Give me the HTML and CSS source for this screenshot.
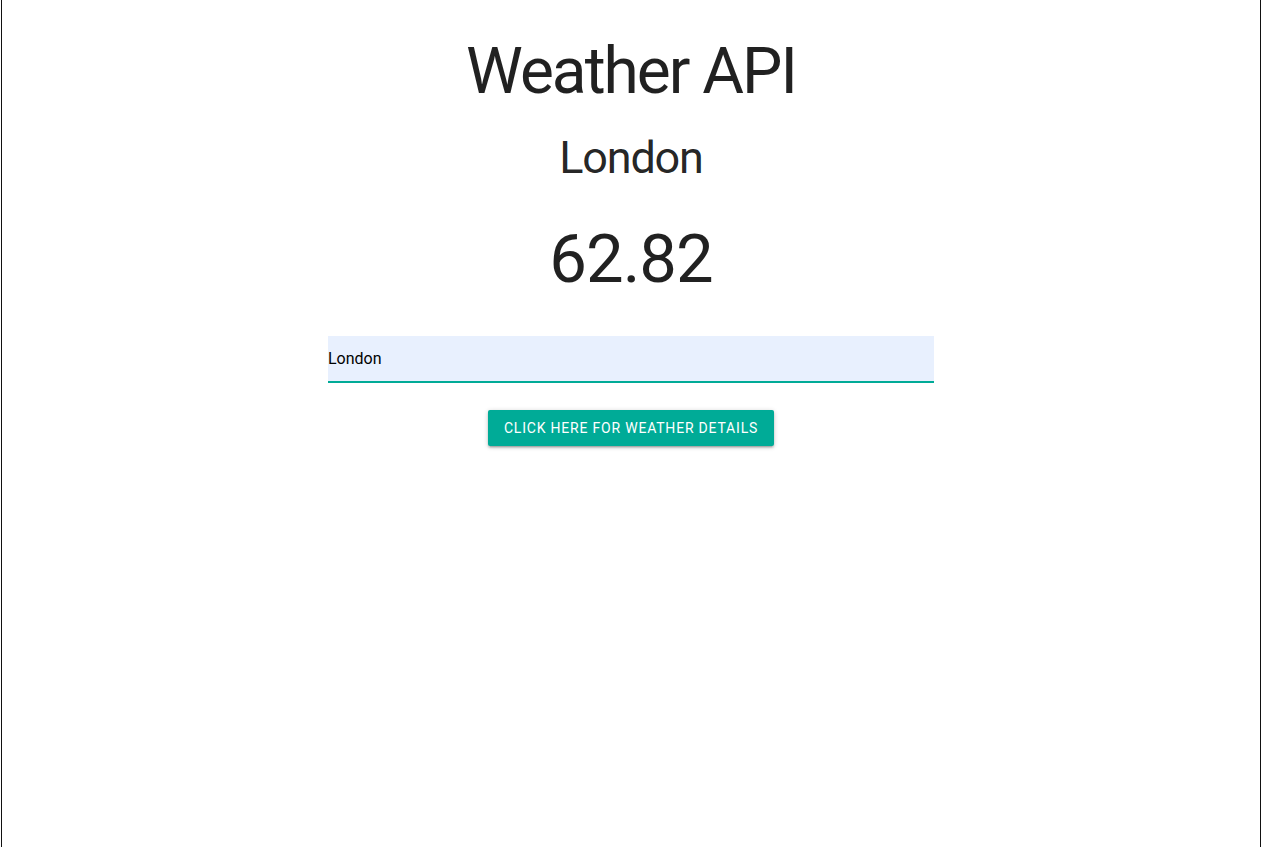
FILE: index.html
```html
<!DOCTYPE html>
<html lang="en">
<head>
<meta charset="utf-8">
<title>Weather API</title>
<link rel="stylesheet" href="styles.css">
</head>
<body>
<div class="frame">
  <main class="app">
    <h1 class="title">Weather API</h1>
    <h3 class="city">London</h3>
    <h1 class="temp">62.82</h1>
    <div class="field">
      <input class="city-input" id="city" type="text" value="London">
    </div>
    <button class="btn" type="button">Click here for weather details</button>
  </main>
</div>
<script src="app.js"></script>
</body>
</html>
```

FILE: styles.css
```css
html, body {
  margin: 0;
  padding: 0;
  background: #fff;
}
body {
  font-family: Roboto, "Liberation Sans", Arial, sans-serif;
  color: rgba(0, 0, 0, 0.87);
}
.frame {
  margin: 0 1px;
  min-height: 847px;
  border-left: 1px solid #111;
  border-right: 1px solid #111;
  box-sizing: border-box;
}
.app {
  width: 606px;
  margin: 0 auto;
  display: flex;
  flex-direction: column;
  align-items: center;
}
.title {
  font-size: 64px;
  font-weight: 400;
  line-height: 74px;
  margin: 35px 0 0;
  letter-spacing: -2px;
}
.city {
  font-size: 45px;
  font-weight: 400;
  line-height: 52px;
  margin: 22.5px 0 0;
  letter-spacing: -1.2px;
}
.temp {
  font-size: 67px;
  font-weight: 400;
  line-height: 74px;
  margin: 38px 0 0;
  letter-spacing: -1px;
}
.field {
  width: 100%;
  margin-top: 40px;
}
.city-input {
  display: block;
  width: 100%;
  box-sizing: border-box;
  height: 47px;
  margin: 0;
  padding: 0;
  border: none;
  border-bottom: 2px solid #00ab97;
  background: #e8f0fe;
  font-family: Roboto, "Liberation Sans", Arial, sans-serif;
  font-size: 16px;
  color: #000;
  caret-color: #000;
  outline: none;
}
.btn {
  margin-top: 27px;
  height: 36px;
  padding: 0 16px;
  border: none;
  border-radius: 2px;
  background: #00ab97;
  color: #fff;
  font-family: Roboto, "Liberation Sans", Arial, sans-serif;
  font-size: 14px;
  letter-spacing: 0.8px;
  text-transform: uppercase;
  box-shadow: 0 2px 2px 0 rgba(0,0,0,0.14), 0 3px 1px -2px rgba(0,0,0,0.12), 0 1px 5px 0 rgba(0,0,0,0.2);
}
```

FILE: app.js
```js
var input = document.getElementById('city');
input.focus();
input.setSelectionRange(input.value.length, input.value.length);
```
